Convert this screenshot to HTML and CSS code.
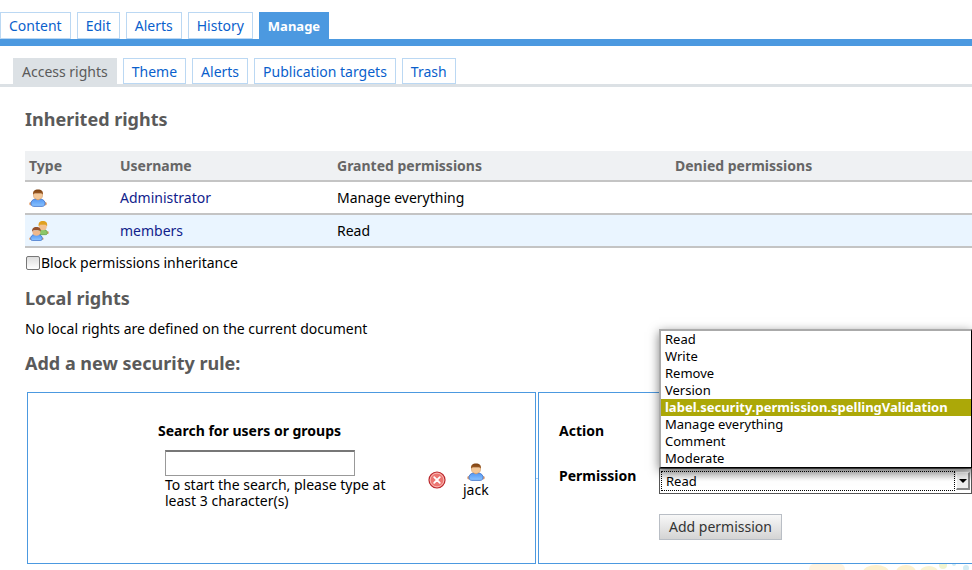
FILE: index.html
```html
<!DOCTYPE html>
<html lang="en">
<head>
  <meta charset="UTF-8">
  <meta name="viewport" content="width=device-width, initial-scale=1.0">
  <title>Access rights</title>
  <link rel="stylesheet" href="styles.css">
</head>
<body>
  <!-- Icons shared by the table and the form -->
  <svg class="sprite" aria-hidden="true">
    <defs>
      <linearGradient id="blueShirt" x1="0" y1="0" x2="0" y2="1">
        <stop offset="0" stop-color="#4f94f2"/>
        <stop offset="1" stop-color="#8cc4ff"/>
      </linearGradient>
      <linearGradient id="hair" x1="0" y1="0" x2="0" y2="1">
        <stop offset="0" stop-color="#7a3f10"/>
        <stop offset="1" stop-color="#a8642a"/>
      </linearGradient>
      <symbol id="user" viewBox="0 0 18 18">
        <circle cx="1.8" cy="14.8" r="1.7" fill="#e8a878"/>
        <circle cx="16.2" cy="14.8" r="1.7" fill="#e8a878"/>
        <path d="M2 13.500C2.800 10.600 5.600 9.700 9 9.700s6.200.9 7 3.800c.6 2.300-.8 3.900-2.800 3.900H4.800c-2 0-3.400-1.600-2.800-3.900z" fill="url(#blueShirt)" stroke="#2e62c0" stroke-width=".7"/>
        <path d="M6.500 9.600h5L9 11.400z" fill="#e3a878"/>
        <path d="M4.500 4.500h9v2.300c0 2.300-2 3.700-4.500 3.700S4.500 9.100 4.500 6.800z" fill="#f4c898" stroke="#c48c58" stroke-width=".5"/>
        <path d="M4.100 5.800C3.400 2.300 5.700.5 9 .5s5.600 1.800 4.900 5.300c-.5-1-1.300-1.500-2.600-1.500H6.700c-1.300 0-2.100.5-2.600 1.500z" fill="url(#hair)"/>
      </symbol>
    </defs>
  </svg>

  <!-- Main tabs -->
  <nav class="tabs">
    <a href="#">Content</a>
    <a href="#">Edit</a>
    <a href="#">Alerts</a>
    <a href="#">History</a>
    <a href="#" class="active">Manage</a>
  </nav>

  <!-- Sub tabs -->
  <nav class="tabs sub-tabs">
    <a href="#" class="active">Access rights</a>
    <a href="#">Theme</a>
    <a href="#">Alerts</a>
    <a href="#">Publication targets</a>
    <a href="#">Trash</a>
  </nav>

  <main class="content">
    <h2>Inherited rights</h2>
    <table class="rights">
      <thead>
        <tr>
          <th class="col-type">Type</th>
          <th class="col-user">Username</th>
          <th class="col-granted">Granted permissions</th>
          <th>Denied permissions</th>
        </tr>
      </thead>
      <tbody>
        <tr>
          <td><svg class="icon"><use href="#user"/></svg></td>
          <td><a href="#">Administrator</a></td>
          <td>Manage everything</td>
          <td></td>
        </tr>
        <tr class="even">
          <td>
            <svg class="icon icon-group" viewBox="0 0 18 18">
              <circle cx="16.700" cy="10.500" r="1.200" fill="#e8a878"/>
              <path d="M8 9.500c1-1.500 2.500-2 4.500-2 2.500 0 4.200 1.500 4 3.500-.1 1-.8 1.300-1.800 1.300H8z" fill="#8cc668" stroke="#5a9a3c" stroke-width=".6"/>
              <path d="M9 3h7v2.300c0 1.900-1.600 3-3.500 3S9 7.200 9 5.300z" fill="#f2c08f"/>
              <path d="M8.700 4.800C8.200 1.700 9.700.1 12.500.1s4.300 1.600 3.800 4.700c-.6-1.100-1.200-1.500-2.100-1.500h-3.400c-.9 0-1.500.4-2.100 1.500z" fill="#e0a020"/>
              <circle cx="1.300" cy="16" r="1.200" fill="#e8a878"/>
              <circle cx="12" cy="16" r="1.200" fill="#e8a878"/>
              <path d="M1.500 15c.7-2.400 2.600-3.200 5.200-3.200s4.500.8 5.200 3.200c.4 1.700-.6 2.600-1.800 2.600H3.300C2.100 17.600 1.100 16.700 1.500 15z" fill="url(#blueShirt)" stroke="#2e62c0" stroke-width=".6"/>
              <path d="M3.200 8.500h7v1.800c0 1.900-1.600 3-3.500 3s-3.500-1.100-3.500-3z" fill="#eeb88c"/>
              <path d="M2.900 9.600c-.5-2.800 1-4.300 3.800-4.300s4.300 1.500 3.800 4.300c-.6-.9-1.200-1.300-2.100-1.300H5c-.9 0-1.500.4-2.100 1.300z" fill="#96522e"/>
            </svg>
          </td>
          <td><a href="#">members</a></td>
          <td>Read</td>
          <td></td>
        </tr>
      </tbody>
    </table>

    <div class="block-row">
      <input type="checkbox" id="blockInheritance">
      <label for="blockInheritance">Block permissions inheritance</label>
    </div>

    <h2>Local rights</h2>
    <p class="notice">No local rights are defined on the current document</p>

    <h2>Add a new security rule:</h2>
    <form class="rule-form">
      <!-- User search -->
      <div class="panel search-panel">
        <div class="search">
          <label for="userSearch">Search for users or groups</label>
          <input type="text" id="userSearch">
          <p>To start the search, please type at least 3 character(s)</p>
        </div>
        <button type="button" class="remove" aria-label="Remove jack">
          <svg viewBox="0 0 18 18">
            <circle cx="9" cy="9" r="8" fill="#ec7672" stroke="#b8272c" stroke-width="1.200"/>
            <circle cx="9" cy="9" r="6.800" fill="none" stroke="#f9c0ba" stroke-width=".9"/>
            <path d="M6.200 6.200l5.600 5.600M11.800 6.200l-5.600 5.600" stroke="#fff" stroke-width="1.800" stroke-linecap="round"/>
          </svg>
        </button>
        <div class="picked">
          <svg class="icon"><use href="#user"/></svg>
          <span>jack</span>
        </div>
      </div>
      <div class="joint"></div>

      <!-- Permission -->
      <div class="panel rule-panel">
        <span class="field-label">Action</span>
        <label class="field-label permission-label" for="permission">Permission</label>
        <div class="select-box">
          <select id="permission">
            <option>Read</option>
            <option>Write</option>
            <option>Remove</option>
            <option>Version</option>
            <option>label.security.permission.spellingValidation</option>
            <option>Manage everything</option>
            <option>Comment</option>
            <option>Moderate</option>
          </select>
          <span class="arrow"></span>
          <ul class="options">
            <li>Read</li>
            <li>Write</li>
            <li>Remove</li>
            <li>Version</li>
            <li class="selected">label.security.permission.spellingValidation</li>
            <li>Manage everything</li>
            <li>Comment</li>
            <li>Moderate</li>
          </ul>
        </div>
        <button type="submit" class="submit">Add permission</button>
      </div>
    </form>
  </main>

  <footer class="footer">
    <svg viewBox="0 0 172 6" width="172" height="6">
      <path d="M9 6q0-5 4-6h28q4 1 4 6z" fill="#fff3df"/>
      <ellipse cx="76" cy="8" rx="13" ry="7" fill="#fdf0cd"/>
      <ellipse cx="106" cy="8" rx="10" ry="7" fill="#fdf0cd"/>
      <ellipse cx="129" cy="8" rx="9" ry="6" fill="#faf3d2"/>
      <circle cx="143" cy="1" r="4" fill="#f0f4d0"/>
      <circle cx="154" cy="0" r="2" fill="#d4ecf4"/>
      <circle cx="166" cy="4" r="3" fill="#d4ecf4"/>
    </svg>
  </footer>
</body>
</html>
```

FILE: styles.css
```css
* {
  box-sizing: border-box;
}

body {
  margin: 0;
  padding-top: 12px;
  background: #fff;
  color: #000;
  font-family: "Noto Sans", "Open Sans", sans-serif;
  font-size: 14px;
  line-height: 16px;
  overflow: hidden;
}

a {
  text-decoration: none;
}

h2 {
  margin: 0;
  color: #5a5a5a;
  font-size: 18px;
  line-height: 24px;
}

.sprite {
  position: absolute;
  width: 0;
  height: 0;
}

.icon {
  display: block;
  width: 18px;
  height: 18px;
}

.icon-group {
  width: 20px;
  height: 20px;
}

/* Tabs */
.tabs {
  display: flex;
  gap: 6px;
  border-bottom: 7px solid #4c99e0;
}

.tabs a {
  padding: 5px 8px 4px;
  border: 1px solid #bbd8f3;
  color: #0a5fcc;
}

.tabs a.active {
  border-color: #4c99e0;
  background: #4c99e0;
  color: #fff;
  font-size: 13px;
  font-weight: bold;
}

.sub-tabs {
  margin-top: 12px;
  padding-left: 13px;
  border-bottom: 3px solid #dce1e5;
}

.sub-tabs a {
  padding-bottom: 3px;
}

.sub-tabs a.active {
  border-color: #dce1e5;
  background: #dce1e5;
  color: #5a5a5a;
  font-size: 14px;
  font-weight: normal;
}

.content {
  padding: 20px 0 0 25px;
}

/* Inherited rights */
.rights {
  width: 100%;
  margin: 20px 0 7px;
  border-collapse: collapse;
  table-layout: fixed;
}

.rights tr {
  height: 33px;
  border-bottom: 2px solid #c4c4c4;
}

.rights thead tr {
  height: 30px;
  background: #eff1f3;
}

.rights th {
  padding: 0 4px;
  color: #666;
  text-align: left;
}

.rights td {
  padding: 0 4px;
}

.rights a {
  color: #10218b;
}

.even {
  background: #eaf5ff;
}

.col-type {
  width: 91px;
}

.col-user {
  width: 217px;
}

.col-granted {
  width: 338px;
}

.block-row {
  display: flex;
  align-items: center;
  margin-bottom: 15px;
}

.block-row input {
  appearance: none;
  width: 14px;
  height: 14px;
  margin: 0 1px;
  border: 1px solid #777;
  border-radius: 2px;
  background: linear-gradient(#ddd, #fff);
}

.notice {
  margin: 11px 0 14px;
}

/* New rule form */
.rule-form {
  display: flex;
  margin-top: 17px;
  padding-left: 2px;
}

.panel {
  display: flex;
  height: 172px;
  border: 1px solid #4c99e0;
}

.search-panel {
  width: 509px;
  padding: 30px 0 0 130px;
}

.search {
  display: flex;
  flex-direction: column;
  width: 237px;
}

.search label {
  font-weight: bold;
}

.search input {
  width: 190px;
  height: 26px;
  margin: 11px 0 1px 7px;
  border: 1px solid #999;
  border-top: 2px solid #777;
}

.search p {
  margin: 0;
  padding-left: 7px;
}

.remove {
  width: 18px;
  height: 18px;
  margin: 48px 17px 0 33px;
  padding: 0;
  border: none;
  background: none;
}

.picked {
  display: flex;
  flex-direction: column;
  align-items: center;
  margin-top: 40px;
  line-height: 18px;
}

.joint {
  align-self: center;
  width: 2px;
  border-top: 1px solid #a9cdf0;
}

.rule-panel {
  display: grid;
  flex: 1;
  grid-template-columns: 100px 1fr;
  grid-template-rows: 45px 46px auto;
  align-items: start;
  padding: 30px 0 0 20px;
  border-right: none;
}

.field-label {
  font-weight: bold;
}

.permission-label {
  grid-column: 1;
}

.select-box {
  position: relative;
}

.select-box select {
  appearance: none;
  display: block;
  width: 100%;
  height: 26px;
  padding: 0 6px;
  border: 1px solid #555;
  border-radius: 0;
  outline: none;
  background: linear-gradient(#ccc, #fff 12px);
  font: inherit;
  font-size: 13px;
}

/* Focus ring, stops before the arrow */
.select-box::before {
  content: "";
  position: absolute;
  top: 3px;
  right: 17px;
  bottom: 3px;
  left: 2px;
  border: 1px dotted #000;
  pointer-events: none;
}

.arrow {
  position: absolute;
  top: 4px;
  right: 2px;
  width: 14px;
  height: 18px;
  border: 1px solid #fff;
  border-right: 2px solid #888;
  border-bottom: 2px solid #888;
  background: #eee;
  pointer-events: none;
}

.arrow::before {
  content: "";
  position: absolute;
  top: 6px;
  left: 2px;
  border: 4px solid transparent;
  border-top-color: #000;
  border-bottom: none;
}

.options {
  position: absolute;
  bottom: 26px;
  left: 0;
  width: 100%;
  margin: 0;
  padding: 0;
  border: 2px solid #aaa;
  border-right: 1px solid #000;
  border-bottom: 1px solid #000;
  background: #fff;
  box-shadow: 0 3px 10px rgba(0, 0, 0, 0.5);
  font-size: 13px;
  line-height: 17px;
  list-style: none;
}

.options li {
  padding: 0 4px;
}

.options .selected {
  background: #aca808;
  color: #fff;
  font-weight: bold;
}

.submit {
  grid-column: 2;
  justify-self: start;
  height: 26px;
  padding: 0 9px;
  border: 1px solid #b9bec5;
  background: linear-gradient(#f8f8f8, #d4d4d4);
  color: #333;
  font: inherit;
}

.footer {
  display: flex;
  justify-content: flex-end;
  height: 6px;
}
```
